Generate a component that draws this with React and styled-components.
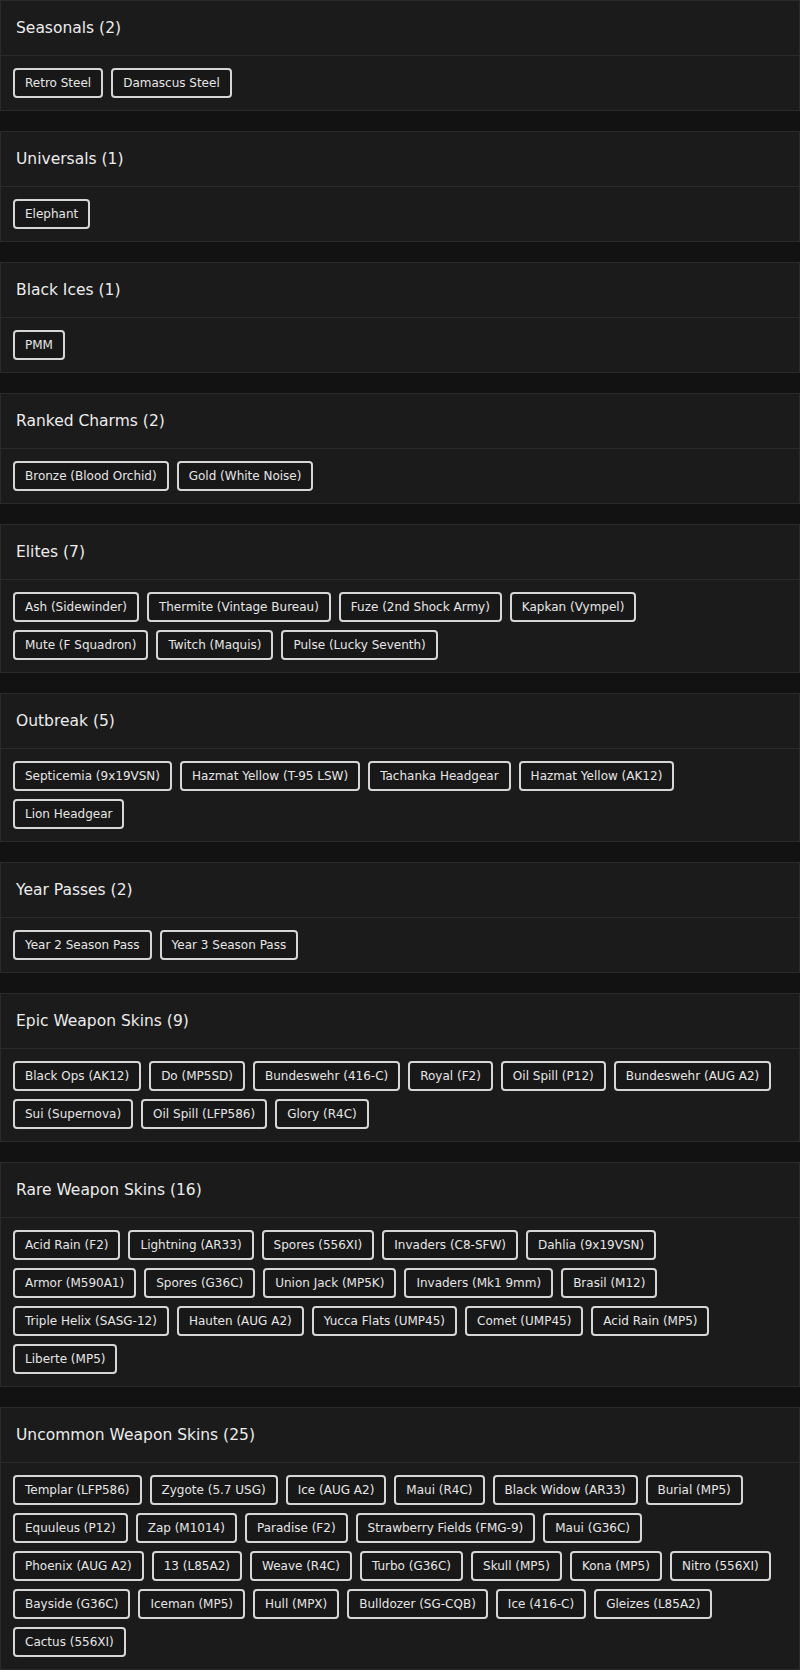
import React from "react";
import styled, {createGlobalStyle} from "styled-components";

const GlobalStyle = createGlobalStyle`
  html, body {
    margin: 0;
    padding: 0;
    background-color: #121212;
  }
`;

const sections = [
  {title: "Seasonals", items: ["Retro Steel", "Damascus Steel"]},
  {title: "Universals", items: ["Elephant"]},
  {title: "Black Ices", items: ["PMM"]},
  {title: "Ranked Charms", items: ["Bronze (Blood Orchid)", "Gold (White Noise)"]},
  {
    title: "Elites",
    items: [
      "Ash (Sidewinder)", "Thermite (Vintage Bureau)", "Fuze (2nd Shock Army)", "Kapkan (Vympel)",
      "Mute (F Squadron)", "Twitch (Maquis)", "Pulse (Lucky Seventh)"
    ]
  },
  {
    title: "Outbreak",
    items: [
      "Septicemia (9x19VSN)", "Hazmat Yellow (T-95 LSW)", "Tachanka Headgear",
      "Hazmat Yellow (AK12)", "Lion Headgear"
    ]
  },
  {title: "Year Passes", items: ["Year 2 Season Pass", "Year 3 Season Pass"]},
  {
    title: "Epic Weapon Skins",
    items: [
      "Black Ops (AK12)", "Do (MP5SD)", "Bundeswehr (416-C)", "Royal (F2)", "Oil Spill (P12)",
      "Bundeswehr (AUG A2)", "Sui (Supernova)", "Oil Spill (LFP586)", "Glory (R4C)"
    ]
  },
  {
    title: "Rare Weapon Skins",
    items: [
      "Acid Rain (F2)", "Lightning (AR33)", "Spores (556XI)", "Invaders (C8-SFW)", "Dahlia (9x19VSN)",
      "Armor (M590A1)", "Spores (G36C)", "Union Jack (MP5K)", "Invaders (Mk1 9mm)", "Brasil (M12)",
      "Triple Helix (SASG-12)", "Hauten (AUG A2)", "Yucca Flats (UMP45)", "Comet (UMP45)",
      "Acid Rain (MP5)", "Liberte (MP5)"
    ]
  },
  {
    title: "Uncommon Weapon Skins",
    items: [
      "Templar (LFP586)", "Zygote (5.7 USG)", "Ice (AUG A2)", "Maui (R4C)", "Black Widow (AR33)",
      "Burial (MP5)", "Equuleus (P12)", "Zap (M1014)", "Paradise (F2)", "Strawberry Fields (FMG-9)",
      "Maui (G36C)", "Phoenix (AUG A2)", "13 (L85A2)", "Weave (R4C)", "Turbo (G36C)", "Skull (MP5)",
      "Kona (MP5)", "Nitro (556XI)", "Bayside (G36C)", "Iceman (MP5)", "Hull (MPX)",
      "Bulldozer (SG-CQB)", "Ice (416-C)", "Gleizes (L85A2)", "Cactus (556XI)"
    ]
  }
];

const App = () => {
  return (
    <>
      <GlobalStyle/>
      <Page>
        {sections.map(section => (
          <Card key={section.title}>
            <CardHeader>
              {section.title} ({section.items.length})
            </CardHeader>
            <ChipList>
              {section.items.map((item, i) => (
                <Chip key={i}>{item}</Chip>
              ))}
            </ChipList>
          </Card>
        ))}
      </Page>
    </>
  );
}

const Page = styled.div`
  display: flex;
  flex-direction: column;
  gap: 20px;
  width: 800px;
`;

const Card = styled.section`
  background-color: #1b1b1b;
  border: 1px solid #2b2b2b;
`;

const CardHeader = styled.div`
  height: 54px;
  display: flex;
  align-items: center;
  padding: 0 15px;
  border-bottom: 1px solid #2b2b2b;

  font-family: "DejaVu Sans", sans-serif;
  font-weight: 400;
  font-size: 15.5px;
  color: #ececec;
`;

// right padding keeps the wrap points where the original layout puts them
const ChipList = styled.div`
  display: flex;
  flex-wrap: wrap;
  gap: 8px 8px;
  padding: 12px 21.5px 12px 12px;
`;

const Chip = styled.div`
  box-sizing: border-box;
  height: 30px;
  padding: 0 10px;
  display: flex;
  align-items: center;
  border: 2px solid #d6d6d6;
  border-radius: 4px;
  background-color: #181818;

  font-family: "DejaVu Sans", sans-serif;
  font-size: 12px;
  color: #e6e6e6;
  white-space: nowrap;
`;

export default App;
